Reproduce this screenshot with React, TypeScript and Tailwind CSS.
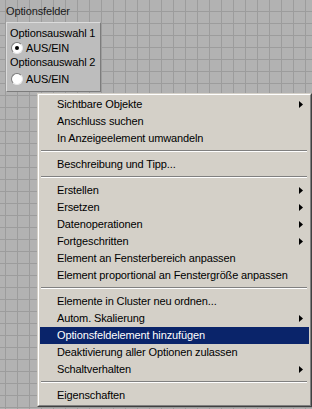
const font = { fontFamily: '"Liberation Sans", Arial, sans-serif' }

type Item = { label: string; sub?: boolean; active?: boolean } | 'sep'

const items: Item[] = [
  { label: 'Sichtbare Objekte', sub: true },
  { label: 'Anschluss suchen' },
  { label: 'In Anzeigeelement umwandeln' },
  'sep',
  { label: 'Beschreibung und Tipp...' },
  'sep',
  { label: 'Erstellen', sub: true },
  { label: 'Ersetzen', sub: true },
  { label: 'Datenoperationen', sub: true },
  { label: 'Fortgeschritten', sub: true },
  { label: 'Element an Fensterbereich anpassen' },
  { label: 'Element proportional an Fenstergröße anpassen' },
  'sep',
  { label: 'Elemente in Cluster neu ordnen...' },
  { label: 'Autom. Skalierung', sub: true },
  { label: 'Optionsfeldelement hinzufügen', active: true },
  { label: 'Deaktivierung aller Optionen zulassen' },
  { label: 'Schaltverhalten', sub: true },
  'sep',
  { label: 'Eigenschaften' },
]

const Arrow = ({ white }: { white?: boolean }) => (
  <svg width="4" height="7" viewBox="0 0 4 7">
    <path d="M0 0 L4 3.5 L0 7 Z" fill={white ? '#fff' : '#000'} />
  </svg>
)

const Radio = ({ checked }: { checked?: boolean }) => (
  <div className="w-[12px] h-[12px] rounded-full bg-white border border-t-[#7a7a7a] border-l-[#7a7a7a] border-b-[#e8e8e8] border-r-[#e8e8e8] flex items-center justify-center">
    {checked && <div className="w-[4px] h-[4px] rounded-full bg-black" />}
  </div>
)

const App = () => {
  return (
    <div
      className="relative w-[312px] h-[409px] overflow-hidden bg-[#b2b2b2] bg-[linear-gradient(to_right,#9c9c9c_1px,transparent_1px),linear-gradient(to_bottom,#9c9c9c_1px,transparent_1px)] bg-size-[12px_12px] bg-position-[5px_11px] pl-[6px] pt-[5px] text-[11px] tracking-[-0.13px] text-black"
      style={font}
    >
      <div className="h-[13px] leading-[13px] text-[#1a1a1a]">Optionsfelder</div>
      <div className="mt-[4px] w-[95px] h-[70px] bg-[#bdbdbd] border border-t-[#dcdcdc] border-l-[#dcdcdc] border-b-[#7c7c7c] border-r-[#7c7c7c] pl-[3px] pt-[3px]">
        <div className="h-[14px] leading-[14px]">Optionsauswahl 1</div>
        <div className="h-[16px] flex items-center gap-[3px] pl-[1px]">
          <Radio checked />
          <span>AUS/EIN</span>
        </div>
        <div className="h-[13px] leading-[13px]">Optionsauswahl 2</div>
        <div className="mt-[2px] h-[16px] flex items-center gap-[3px] pl-[1px]">
          <Radio />
          <span>AUS/EIN</span>
        </div>
      </div>

      <div className="absolute left-[37px] top-[93px] w-[275px] border border-t-[#d4d0c8] border-l-[#d4d0c8] border-b-[#404040] border-r-[#404040]">
        <div className="border border-t-white border-l-white border-b-[#808080] border-r-[#808080] bg-[#d4d0c8] p-[1px]">
          {items.map((it, i) =>
            it === 'sep' ? (
              <div key={i} className="h-[9px] pt-[3px] mx-[1px] mr-[2px]">
                <div className="h-[1px] bg-[#808080]" />
                <div className="h-[1px] bg-white" />
              </div>
            ) : (
              <div
                key={i}
                className={`h-[17px] flex items-center justify-between pl-[17px] pr-[6px] ${
                  it.active ? 'bg-[#0a246a] text-white' : 'text-black'
                }`}
              >
                <span>{it.label}</span>
                {it.sub && <Arrow white={it.active} />}
              </div>
            )
          )}
        </div>
      </div>
    </div>
  )
}

export default App
